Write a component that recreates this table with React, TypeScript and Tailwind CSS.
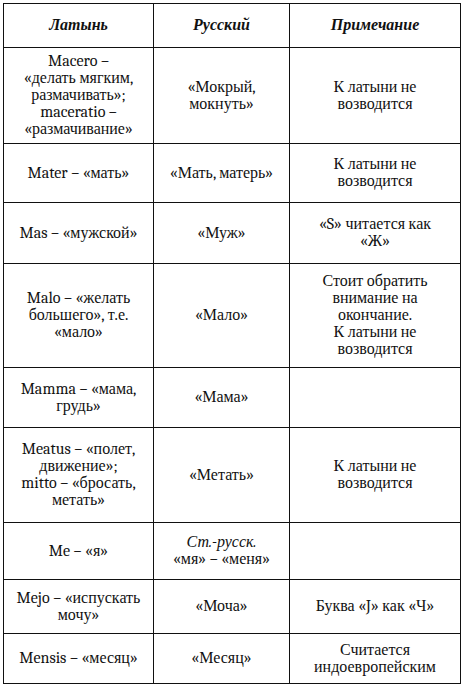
type Row = {
  h: string;
  lat: React.ReactNode;
  rus: React.ReactNode;
  note: React.ReactNode;
};

const rows: Row[] = [
  {
    h: "h-[96px]",
    lat: (
      <>
        Macero –<br />
        «делать мягким,
        <br />
        размачивать»;
        <br />
        maceratio –<br />
        «размачивание»
      </>
    ),
    rus: (
      <>
        «Мокрый,
        <br />
        мокнуть»
      </>
    ),
    note: (
      <>
        К латыни не
        <br />
        возводится
      </>
    ),
  },
  {
    h: "h-[59px]",
    lat: "Mater – «мать»",
    rus: "«Мать, матерь»",
    note: (
      <>
        К латыни не
        <br />
        возводится
      </>
    ),
  },
  {
    h: "h-[61px]",
    lat: "Mas – «мужской»",
    rus: "«Муж»",
    note: (
      <>
        «S» читается как
        <br />
        «Ж»
      </>
    ),
  },
  {
    h: "h-[104px]",
    lat: (
      <>
        Malo – «желать
        <br />
        большего», т.е.
        <br />
        «мало»
      </>
    ),
    rus: "«Мало»",
    note: (
      <>
        Стоит обратить
        <br />
        внимание на
        <br />
        окончание.
        <br />
        К латыни не
        <br />
        возводится
      </>
    ),
  },
  {
    h: "h-[60px]",
    lat: (
      <>
        Mamma – «мама,
        <br />
        грудь»
      </>
    ),
    rus: "«Мама»",
    note: "",
  },
  {
    h: "h-[95px]",
    lat: (
      <>
        Meatus – «полет,
        <br />
        движение»;
        <br />
        mitto – «бросать,
        <br />
        метать»
      </>
    ),
    rus: "«Метать»",
    note: (
      <>
        К латыни не
        <br />
        возводится
      </>
    ),
  },
  {
    h: "h-[57px]",
    lat: "Me – «я»",
    rus: (
      <>
        <i>Ст.-русск.</i>
        <br />
        «мя» – «меня»
      </>
    ),
    note: "",
  },
  {
    h: "h-[54px]",
    lat: (
      <>
        Mejo – «испускать
        <br />
        мочу»
      </>
    ),
    rus: "«Моча»",
    note: "Буква «J» как «Ч»",
  },
  {
    h: "h-[50px]",
    lat: "Mensis – «месяц»",
    rus: "«Месяц»",
    note: (
      <>
        Считается
        <br />
        индоевропейским
      </>
    ),
  },
];

const cell =
  "border border-[#111] text-center align-middle px-1 font-serif text-[16px] leading-[17px] text-[#111]";

export default function App() {
  return (
    <div className="min-h-screen bg-white pl-[3px] pt-[3px] font-serif">
      <table className="table-fixed border-collapse w-[457px]">
        <colgroup>
          <col className="w-[150px]" />
          <col className="w-[136px]" />
          <col className="w-[171px]" />
        </colgroup>
        <thead>
          <tr className="h-[44px]">
            <th className={`${cell} font-bold italic`}>Латынь</th>
            <th className={`${cell} font-bold italic`}>Русский</th>
            <th className={`${cell} font-bold italic`}>Примечание</th>
          </tr>
        </thead>
        <tbody>
          {rows.map((r, i) => (
            <tr key={i} className={r.h}>
              <td className={cell}>{r.lat}</td>
              <td className={cell}>{r.rus}</td>
              <td className={cell}>{r.note}</td>
            </tr>
          ))}
        </tbody>
      </table>
    </div>
  );
}
